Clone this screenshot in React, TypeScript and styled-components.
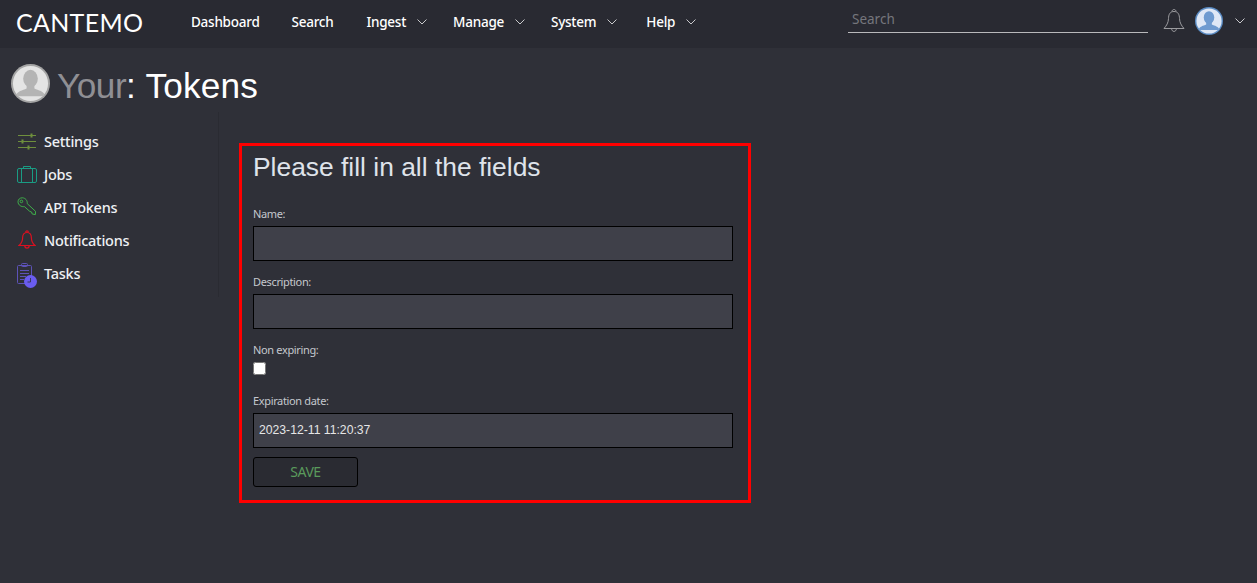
import React from "react";
import styled, { createGlobalStyle } from "styled-components";

const GlobalStyle = createGlobalStyle`
  html, body {
    margin: 0;
    padding: 0;
    height: 100%;
    background: #2f3038;
    font-family: "Noto Sans", "Open Sans", sans-serif;
  }
  * { box-sizing: border-box; }
`;

const Page = styled.div`
  width: 1257px;
  height: 583px;
  overflow: hidden;
  background: #2f3038;
`;

const TopBar = styled.header`
  display: flex;
  align-items: center;
  height: 48px;
  background: #292a32;
  padding: 0 12px 5px 16px;
`;

const Logo = styled.div`
  width: 175px;
  font-family: "Lato", sans-serif;
  font-size: 25px;
  font-weight: 400;
  letter-spacing: 0.3px;
  color: #fff;
`;

const Nav = styled.nav`
  display: flex;
  align-items: center;
  flex: 1;
`;

const NavItem = styled.a<{ $after: number }>`
  display: flex;
  align-items: center;
  margin-right: ${({ $after }) => $after}px;
  font-size: 13.5px;
  font-weight: 500;
  letter-spacing: -0.25px;
  color: #fff;
  svg { margin-left: 11px; }
`;

const SearchBox = styled.input`
  width: 300px;
  height: 27px;
  margin: 0 15px 4px 0;
  padding: 0 4px;
  background: transparent;
  border: 0;
  border-bottom: 1px solid #b9b9bc;
  outline: none;
  font-family: inherit;
  font-size: 13.5px;
  color: #fff;
  &::placeholder { color: #75767c; opacity: 1; }
`;

const UserArea = styled.div`
  display: flex;
  align-items: center;
  gap: 10px;
  margin-bottom: 2px;
  > svg:last-child { margin-left: 2px; }
`;

const HeadingRow = styled.div`
  display: flex;
  align-items: center;
  height: 64px;
  padding: 6px 0 0 11px;
  gap: 7px;
`;

const Heading = styled.h1`
  margin: 6px 0 0;
  font-family: "Liberation Sans", Arial, sans-serif;
  font-size: 35.2px;
  font-weight: 400;
  letter-spacing: 0.2px;
  color: #fff;
  span { color: #8f8f94; letter-spacing: -0.5px; }
`;

const Content = styled.div`
  display: flex;
`;

const Sidebar = styled.aside`
  width: 219px;
  height: 185px;
  padding-top: 12px;
  border-right: 1px solid #2a2b32;
`;

const SideRow = styled.a`
  display: flex;
  align-items: center;
  height: 33px;
  padding-left: 17px;
  gap: 7px;
  font-size: 14.5px;
  font-weight: 500;
  letter-spacing: -0.25px;
  color: #eef0f4;
`;

const IconSlot = styled.span<{ $drop?: number }>`
  display: flex;
  width: 20px;
  justify-content: center;
  margin-top: ${({ $drop }) => $drop ?? 0}px;
`;

const FormBox = styled.form`
  display: flex;
  flex-direction: column;
  width: 512px;
  height: 360px;
  margin: 31px 0 0 20px;
  padding: 3px 11px 0;
  border: 3px solid #ff0000;
`;

const FormTitle = styled.h2`
  margin: 0 0 20px;
  font-family: "Liberation Sans", Arial, sans-serif;
  font-size: 26.4px;
  font-weight: 400;
  line-height: 36px;
  color: #dfe3ea;
`;

const Field = styled.div`
  display: flex;
  flex-direction: column;
  margin-bottom: 12px;
`;

const FieldLabel = styled.label`
  height: 18px;
  margin-bottom: 3px;
  font-size: 11px;
  letter-spacing: -0.35px;
  line-height: 18px;
  color: #c5c8ce;
`;

const TextInput = styled.input`
  width: 480px;
  height: 35px;
  padding: 0 5px 2px;
  background: #3f4049;
  border: 1px solid #000;
  outline: none;
  font-family: "Liberation Sans", Arial, sans-serif;
  font-size: 12.2px;
  color: #e6e6e6;
`;

const Check = styled.input`
  width: 13px;
  height: 13px;
  margin: 0;
`;

const CheckField = styled(Field)`
  margin-bottom: 17px;
  align-items: flex-start;
`;

const SaveButton = styled.button`
  width: 105px;
  height: 30px;
  margin-top: -3px;
  padding: 0 0 2px;
  background: #2a2b32;
  border: 1px solid #000;
  border-radius: 3px;
  font-family: inherit;
  font-size: 14px;
  letter-spacing: -0.5px;
  color: #5a9a5c;
`;

const Chevron = () => (
  <svg width="10" height="6" viewBox="0 0 10 6" fill="none" stroke="#c9c9cc" strokeWidth="1">
    <path d="M.5.5 5 5 9.5.5" />
  </svg>
);

const SlidersIcon = () => (
  <svg width="20" height="18" viewBox="0 0 20 18" fill="none" stroke="#6f8f3d" strokeWidth="1">
    <path d="M1 3.5h18M1 9.5h18M1 15.5h18" />
    <path d="M14.5 1.5v4M5.5 7.5v4M11.5 13.5v4" strokeWidth="2" />
  </svg>
);

const CaseIcon = () => (
  <svg width="20" height="18" viewBox="0 0 20 18" fill="none" stroke="#1a9c84" strokeWidth="1">
    <rect x=".5" y="3.5" width="19" height="14" rx="1.5" />
    <path d="M4.5 3.5v14M15.5 3.5v14M6.5 3.5v-2h7v2" />
  </svg>
);

const KeyIcon = () => (
  <svg width="20" height="19" viewBox="0 0 20 19" fill="none" stroke="#3fae4a" strokeWidth="1">
    <path d="M10.2 6.6 18.5 14.3 18.4 17.6 15.2 17 14.6 15 12.8 14.4 7.4 9.6C4.5 10.2 1 8 1 4.8 1 2.4 3 .8 5.2.8 8.4.8 10.6 3.6 10.2 6.6Z" />
    <circle cx="4.4" cy="4.4" r="1.3" />
  </svg>
);

const RedBellIcon = () => (
  <svg width="18" height="20" viewBox="0 0 18 20" fill="none" stroke="#dc1020" strokeWidth="1.2">
    <path d="M9 2.5C5.8 2.5 4.6 5 4.6 8 4.6 11.5 3.4 13.4 1 15.5H17C14.6 13.4 13.4 11.5 13.4 8 13.4 5 12.2 2.5 9 2.5Z" />
    <path d="M7.6 2.6C7.6 .4 10.4 .4 10.4 2.6M6.8 15.5C6.8 19 11.2 19 11.2 15.5" />
  </svg>
);

const TasksIcon = () => (
  <svg width="20" height="26" viewBox="0 0 20 26" fill="none">
    <g stroke="#5d52b8" strokeWidth="1">
      <rect x=".5" y="2.5" width="14" height="18" rx="1" />
      <rect x="4.5" y=".5" width="6" height="3" rx="1" />
      <path d="M3 7.5h9M3 10.5h9M3 13.5h6M3 16.5h4" />
    </g>
    <circle cx="13.5" cy="18.5" r="6.5" fill="#6a5cf0" />
    <path d="M13.5 15v4H10.5" stroke="#2f3038" strokeWidth=".8" />
  </svg>
);

const TopBell = () => (
  <svg width="22" height="26" viewBox="0 0 22 26" fill="none" stroke="#9b9b9f" strokeWidth="1">
    <path d="M11 3.5C6.6 3.5 5.6 7 5.5 10.5 5.4 14.6 3.6 17.6 1 20.5H21C18.4 17.6 16.6 14.6 16.5 10.5 16.4 7 15.4 3.5 11 3.5Z" />
    <path d="M9 3.6C9 .8 13 .8 13 3.6M8.6 20.5C8.6 24.4 13.4 24.4 13.4 20.5" />
  </svg>
);

const Avatar = ({ size, ring, bg, figure }: { size: number; ring: string; bg: string; figure: string }) => (
  <svg width={size} height={size} viewBox="0 0 40 40">
    <defs>
      <clipPath id={`clip-${size}`}>
        <circle cx="20" cy="20" r="18" />
      </clipPath>
    </defs>
    <circle cx="20" cy="20" r="20" fill={ring} />
    <circle cx="20" cy="20" r="18" fill={bg} />
    <g clipPath={`url(#clip-${size})`} fill={figure}>
      <ellipse cx="20" cy="15" rx="7.5" ry="9" />
      <path d="M16 21.5v3.5C12 27 6 27.5 5 33H35C34 27.5 28 27 24 25v-3.5Z" />
    </g>
  </svg>
);

const sideItems = [
  { label: "Settings", icon: <SlidersIcon /> },
  { label: "Jobs", icon: <CaseIcon /> },
  { label: "API Tokens", icon: <KeyIcon /> },
  { label: "Notifications", icon: <RedBellIcon /> },
  { label: "Tasks", icon: <TasksIcon />, drop: 7 },
];

const navItems = [
  { label: "Dashboard", after: 32 },
  { label: "Search", after: 33 },
  { label: "Ingest", menu: true, after: 26 },
  { label: "Manage", menu: true, after: 26 },
  { label: "System", menu: true, after: 29 },
  { label: "Help", menu: true, after: 0 },
];

export default function App() {
  return (
    <Page>
      <GlobalStyle />
      <TopBar>
        <Logo>CANTEMO</Logo>
        <Nav>
          {navItems.map((item) => (
            <NavItem key={item.label} $after={item.after}>
              {item.label}
              {item.menu && <Chevron />}
            </NavItem>
          ))}
        </Nav>
        <SearchBox placeholder="Search" />
        <UserArea>
          <TopBell />
          <Avatar size={28} ring="#5b8cc4" bg="#dfe8f6" figure="#6f9bd0" />
          <Chevron />
        </UserArea>
      </TopBar>
      <HeadingRow>
        <Avatar size={39} ring="#a5a5a5" bg="#e4e4e4" figure="#b4b4b4" />
        <Heading>
          <span>Your</span>: Tokens
        </Heading>
      </HeadingRow>
      <Content>
        <Sidebar>
          {sideItems.map((item) => (
            <SideRow key={item.label}>
              <IconSlot $drop={item.drop}>{item.icon}</IconSlot>
              {item.label}
            </SideRow>
          ))}
        </Sidebar>
        <FormBox>
          <FormTitle>Please fill in all the fields</FormTitle>
          <Field>
            <FieldLabel>Name:</FieldLabel>
            <TextInput />
          </Field>
          <Field>
            <FieldLabel>Description:</FieldLabel>
            <TextInput />
          </Field>
          <CheckField>
            <FieldLabel>Non expiring:</FieldLabel>
            <Check type="checkbox" />
          </CheckField>
          <Field>
            <FieldLabel>Expiration date:</FieldLabel>
            <TextInput defaultValue="2023-12-11 11:20:37" />
          </Field>
          <SaveButton type="button">SAVE</SaveButton>
        </FormBox>
      </Content>
    </Page>
  );
}
